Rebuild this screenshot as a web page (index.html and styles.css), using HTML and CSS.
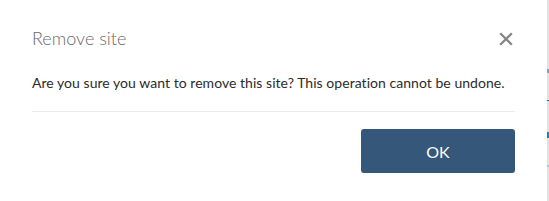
FILE: index.html
```html
<!DOCTYPE html>
<html lang="en">
<head>
    <meta charset="UTF-8">
    <meta name="viewport" content="width=device-width, initial-scale=1.0">
    <title>Remove site</title>
    <link rel="stylesheet" href="styles.css">
</head>
<body>
    <div class="page">
        <div class="modal">
            <div class="modal-header">
                <h2 class="modal-title">Remove site</h2>
                <button class="close-button" aria-label="Close">
                    <svg width="14" height="14" viewBox="0 0 14 14">
                        <path d="M1.2 1.2 L12.8 12.8 M12.8 1.2 L1.2 12.8" stroke="#858585" stroke-width="2.3" fill="none"/>
                    </svg>
                </button>
            </div>
            <p class="modal-body">Are you sure you want to remove this site? This operation cannot be undone.</p>
            <div class="modal-footer">
                <button class="ok-button">OK</button>
            </div>
        </div>
        <!-- edge of the page behind the dialog -->
        <div class="backdrop-edge">
            <span class="mark mark-1"></span>
            <span class="mark mark-2"></span>
            <span class="mark mark-3"></span>
            <span class="mark mark-4"></span>
        </div>
    </div>
</body>
</html>
```

FILE: styles.css
```css
* {
    margin: 0;
    padding: 0;
    box-sizing: border-box;
}
body {
    font-family: Lato, "Open Sans", sans-serif;
    background: #fff;
}
.page {
    display: flex;
    height: 201px;
}
.modal {
    width: 547px;
    padding: 0 32px;
    background: #fff;
}
.modal-header {
    display: flex;
    justify-content: space-between;
    align-items: flex-start;
    padding-top: 27px;
}
.modal-title {
    font-size: 18px;
    line-height: 22px;
    font-weight: 300;
    color: #686868;
}
.close-button {
    background: none;
    border: none;
    margin-top: 5px;
    margin-right: 2px;
    display: flex;
}
.modal-body {
    font-size: 14px;
    line-height: 20px;
    letter-spacing: 0.04px;
    color: #2b2b2b;
    margin-top: 24px;
    padding-bottom: 18px;
    border-bottom: 1px solid #ececec;
}
.modal-footer {
    display: flex;
    justify-content: flex-end;
    padding-top: 17px;
}
.ok-button {
    width: 154px;
    height: 44px;
    background: #34577a;
    color: #fff;
    font-family: Lato, sans-serif;
    font-size: 16px;
    border: none;
    border-radius: 3px;
}
.backdrop-edge {
    width: 2px;
    background: #e2e2e2;
    display: flex;
    flex-direction: column;
}
.mark {
    display: block;
    width: 2px;
}
.mark-1 {
    margin-top: 69px;
    height: 4px;
    background: #7fa6b8;
}
.mark-2 {
    margin-top: 27px;
    height: 1px;
    background: #2a6f80;
}
.mark-3 {
    margin-top: 31px;
    height: 6px;
    background: #1b84b5;
}
.mark-4 {
    margin-top: 27px;
    height: 2px;
    background: #8fd3e0;
}
```
